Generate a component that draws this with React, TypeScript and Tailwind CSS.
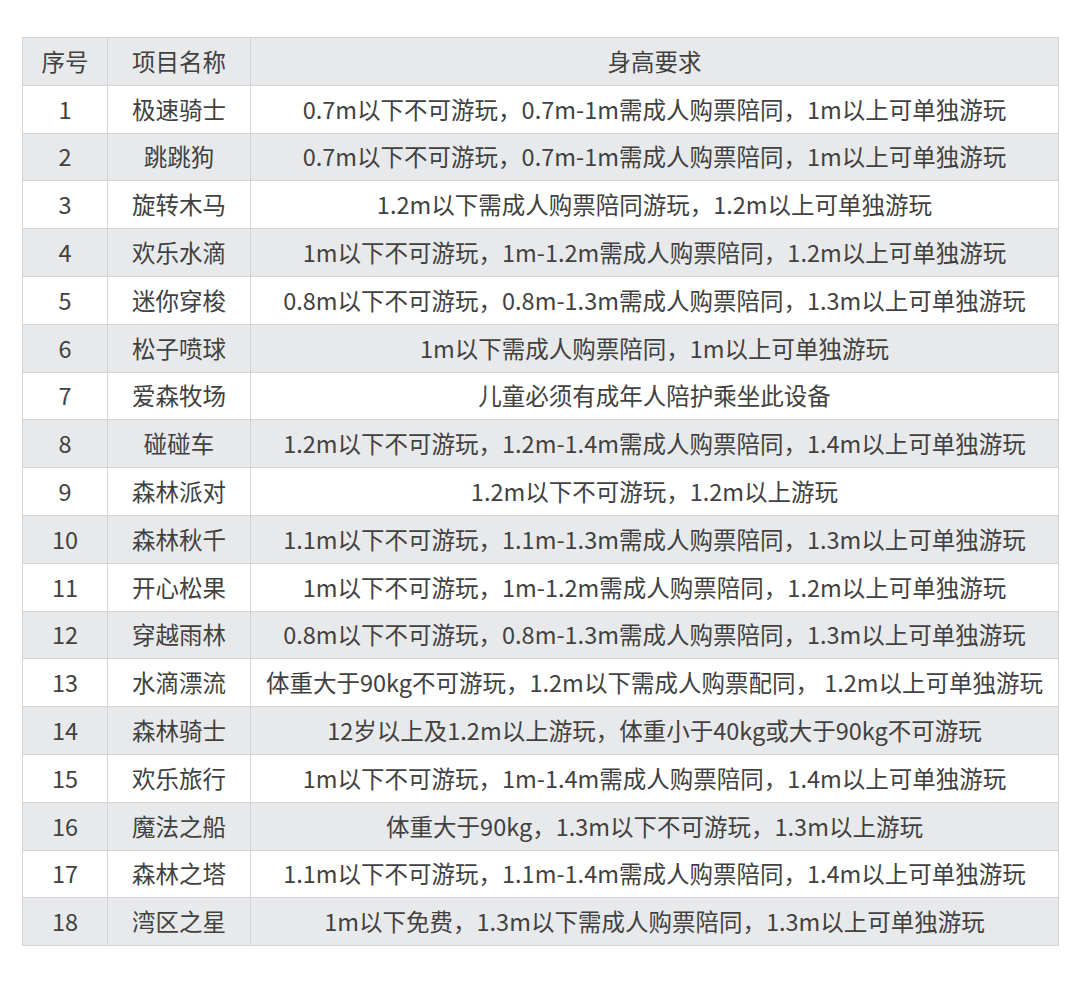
const rows: [string, string, string][] = [
  ['1', '极速骑士', '0.7m以下不可游玩，0.7m-1m需成人购票陪同，1m以上可单独游玩'],
  ['2', '跳跳狗', '0.7m以下不可游玩，0.7m-1m需成人购票陪同，1m以上可单独游玩'],
  ['3', '旋转木马', '1.2m以下需成人购票陪同游玩，1.2m以上可单独游玩'],
  ['4', '欢乐水滴', '1m以下不可游玩，1m-1.2m需成人购票陪同，1.2m以上可单独游玩'],
  ['5', '迷你穿梭', '0.8m以下不可游玩，0.8m-1.3m需成人购票陪同，1.3m以上可单独游玩'],
  ['6', '松子喷球', '1m以下需成人购票陪同，1m以上可单独游玩'],
  ['7', '爱森牧场', '儿童必须有成年人陪护乘坐此设备'],
  ['8', '碰碰车', '1.2m以下不可游玩，1.2m-1.4m需成人购票陪同，1.4m以上可单独游玩'],
  ['9', '森林派对', '1.2m以下不可游玩，1.2m以上游玩'],
  ['10', '森林秋千', '1.1m以下不可游玩，1.1m-1.3m需成人购票陪同，1.3m以上可单独游玩'],
  ['11', '开心松果', '1m以下不可游玩，1m-1.2m需成人购票陪同，1.2m以上可单独游玩'],
  ['12', '穿越雨林', '0.8m以下不可游玩，0.8m-1.3m需成人购票陪同，1.3m以上可单独游玩'],
  ['13', '水滴漂流', '体重大于90kg不可游玩，1.2m以下需成人购票配同， 1.2m以上可单独游玩'],
  ['14', '森林骑士', '12岁以上及1.2m以上游玩，体重小于40kg或大于90kg不可游玩'],
  ['15', '欢乐旅行', '1m以下不可游玩，1m-1.4m需成人购票陪同，1.4m以上可单独游玩'],
  ['16', '魔法之船', '体重大于90kg，1.3m以下不可游玩，1.3m以上游玩'],
  ['17', '森林之塔', '1.1m以下不可游玩，1.1m-1.4m需成人购票陪同，1.4m以上可单独游玩'],
  ['18', '湾区之星', '1m以下免费，1.3m以下需成人购票陪同，1.3m以上可单独游玩'],
]

const cell = 'border border-[#d3d4d8] h-[47.8px] p-0 text-center align-middle whitespace-pre'

export default function App() {
  return (
    <div className="min-h-[984px] w-[1080px] bg-white pt-[37px] pl-[22px] font-['Noto_Sans_CJK_SC','Noto_Sans',sans-serif] text-[23.5px] text-[#414141]">
      <table className="w-[1037px] table-fixed border-collapse">
        <colgroup>
          <col className="w-[85px]" />
          <col className="w-[143px]" />
          <col />
        </colgroup>
        <thead>
          <tr className="bg-[#e8e9eb]">
            <th className={`${cell} font-normal`}>序号</th>
            <th className={`${cell} font-normal`}>项目名称</th>
            <th className={`${cell} font-normal`}>身高要求</th>
          </tr>
        </thead>
        <tbody>
          {rows.map(([no, name, req], i) => (
            <tr key={no} className={i % 2 === 1 ? 'bg-[#e8e9eb]' : 'bg-white'}>
              <td className={cell}>{no}</td>
              <td className={cell}>{name}</td>
              <td className={cell}>{req}</td>
            </tr>
          ))}
        </tbody>
      </table>
    </div>
  )
}
